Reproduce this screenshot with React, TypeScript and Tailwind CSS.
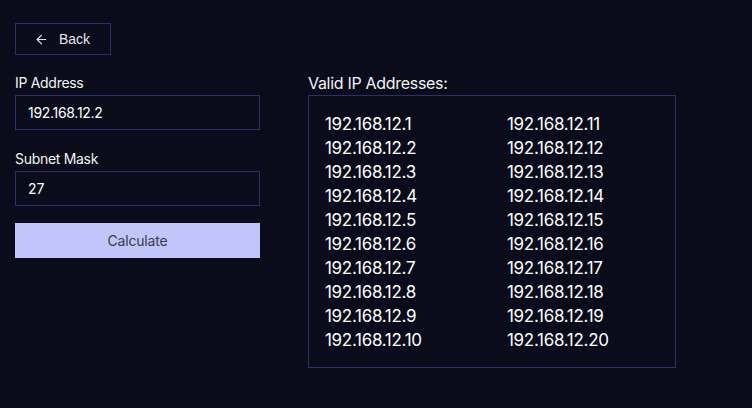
import { ArrowLeft } from 'lucide-react';

const ips = Array.from({ length: 20 }, (_, i) => `192.168.12.${i + 1}`);

export default function App() {
  const left = ips.slice(0, 10);
  const right = ips.slice(10);

  return (
    <div className="w-[752px] h-[408px] bg-[#0a0b1b] text-white px-[15px] pt-[23px]" style={{ fontFamily: 'Inter, "Noto Sans", sans-serif' }}>
      <button className="flex items-center justify-center gap-[10px] w-[96px] h-[32px] border border-[#2b2f6b] text-[14px] text-[#e5e7eb] pr-[2px]" style={{ fontFamily: '"Liberation Sans", Arial, sans-serif' }}>
        <ArrowLeft size={15} strokeWidth={1.8} />
        Back
      </button>

      <div className="flex gap-[48px] mt-[18px]">
        {/* Form */}
        <div className="w-[245px] flex flex-col">
          <label className="text-[14px] leading-[20px] tracking-[-0.3px] text-[#f3f4f6] mb-[2px]">IP Address</label>
          <input
            defaultValue="192.168.12.2"
            className="h-[35px] w-full bg-transparent border border-[#2b2f6b] px-[12px] text-[14px] tracking-[-0.3px] text-white outline-none"
          />
          <label className="text-[14px] leading-[20px] tracking-[-0.3px] text-[#f3f4f6] mt-[19px] mb-[2px]">Subnet Mask</label>
          <input
            defaultValue="27"
            className="h-[35px] w-full bg-transparent border border-[#2b2f6b] px-[12px] text-[14px] text-white outline-none"
          />
          <button className="mt-[17px] h-[35px] w-full bg-[#c0c5fa] text-[#3a3b4a] text-[14px] tracking-[-0.2px]">
            Calculate
          </button>
        </div>

        {/* Results */}
        <div className="flex flex-col">
          <div className="text-[16px] leading-[20px] tracking-[-0.3px] text-[#f3f4f6] mb-[2px]">Valid IP Addresses:</div>
          <div className="w-[368px] h-[273px] border border-[#2b2f6b] pl-[16px] pt-[16px] flex">
            <div className="w-[182px] flex flex-col">
              {left.map(ip => (
                <div key={ip} className="text-[17px] leading-[24px] tracking-[-0.3px]">{ip}</div>
              ))}
            </div>
            <div className="flex flex-col">
              {right.map(ip => (
                <div key={ip} className="text-[17px] leading-[24px] tracking-[-0.3px]">{ip}</div>
              ))}
            </div>
          </div>
        </div>
      </div>
    </div>
  );
}
